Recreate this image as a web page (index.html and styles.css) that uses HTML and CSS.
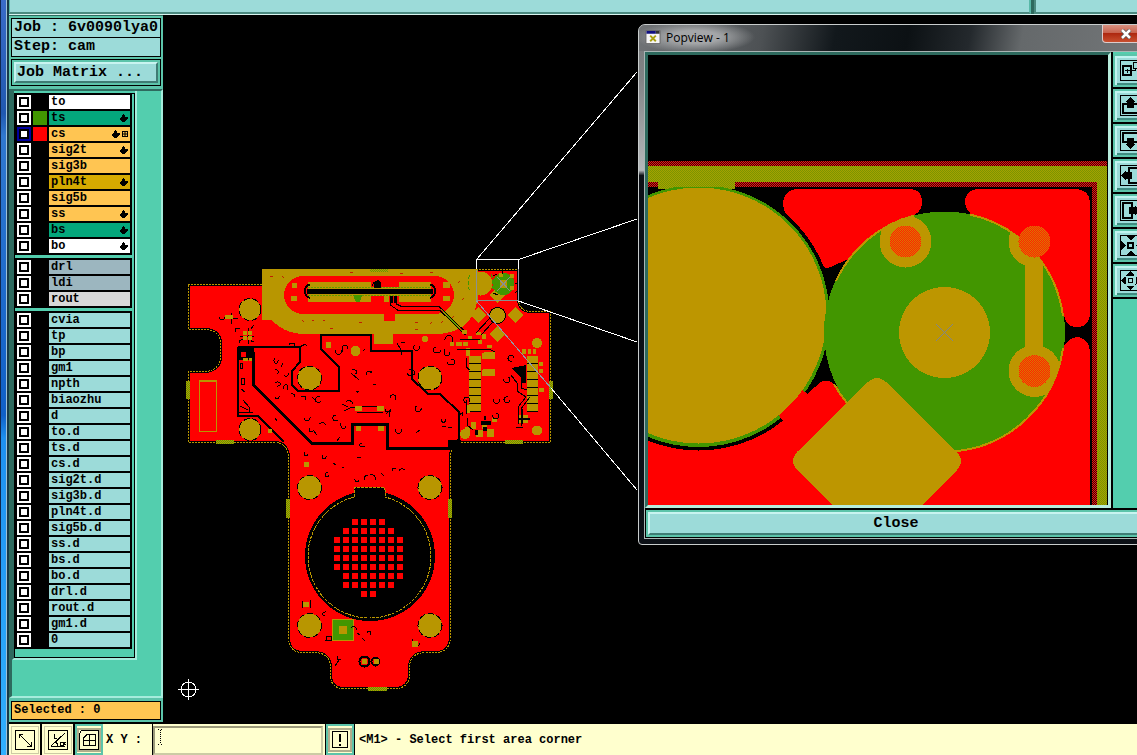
FILE: index.html
```html
<!DOCTYPE html>
<html lang="en">
<head>
<meta charset="utf-8">
<title>6v0090lya0 - cam</title>
<link rel="stylesheet" href="styles.css">
</head>
<body>
<svg class="defs" aria-hidden="true">
  <symbol id="hand" viewBox="0 0 8 8"><path d="M3 0h1v1h1v2h3v2H7v1H6v1H5v1H2V7H1V6H0V4h1V3h1V1h1z"/></symbol>
  <symbol id="grid" viewBox="0 0 6 6"><path d="M0 0h6v6H0zM1 1v1.500h1.500V1zM3.500 1v1.500H5V1zM1 3.500V5h1.500V3.500zM3.500 3.500V5H5V3.500z" fill-rule="evenodd"/></symbol>
</svg>
<div class="app">
  <div class="edge"></div>
  <div class="screen">
    <div class="topstrip"><div class="strip-main"></div><div class="strip-side"></div></div>
    <main class="work">
      <aside class="sidebar">
        <section class="job">
          <div class="field">Job : 6v0090lya0</div>
          <div class="field step">Step: cam</div>
          <div class="matrix"><button class="matrix-btn" type="button">Job Matrix ...</button></div>
        </section>
        <section class="layers">
          <div class="panel">
            <ul class="group">
              <li><input type="checkbox" id="l1"><i></i><label for="l1" class="white">to</label></li>
              <li><input type="checkbox" id="l2"><i class="sw-green"></i><label for="l2" class="green">ts<svg class="hand"><use href="#hand"/></svg></label></li>
              <li><input type="checkbox" id="l3" class="work-layer"><i class="sw-red"></i><label for="l3" class="orange">cs<svg class="hand"><use href="#hand"/></svg><svg class="grid"><use href="#grid"/></svg></label></li>
              <li><input type="checkbox" id="l4"><i></i><label for="l4" class="orange">sig2t<svg class="hand"><use href="#hand"/></svg></label></li>
              <li><input type="checkbox" id="l5"><i></i><label for="l5" class="orange">sig3b</label></li>
              <li><input type="checkbox" id="l6"><i></i><label for="l6" class="gold">pln4t<svg class="hand"><use href="#hand"/></svg></label></li>
              <li><input type="checkbox" id="l7"><i></i><label for="l7" class="orange">sig5b</label></li>
              <li><input type="checkbox" id="l8"><i></i><label for="l8" class="orange">ss<svg class="hand"><use href="#hand"/></svg></label></li>
              <li><input type="checkbox" id="l9"><i></i><label for="l9" class="green">bs<svg class="hand"><use href="#hand"/></svg></label></li>
              <li><input type="checkbox" id="l10"><i></i><label for="l10" class="white">bo<svg class="hand"><use href="#hand"/></svg></label></li>
            </ul>
            <ul class="group">
              <li><input type="checkbox" id="l11"><i></i><label for="l11" class="slate">drl</label></li>
              <li><input type="checkbox" id="l12"><i></i><label for="l12" class="slate">ldi</label></li>
              <li><input type="checkbox" id="l13"><i></i><label for="l13" class="grey">rout</label></li>
            </ul>
            <ul class="group">
              <li><input type="checkbox" id="l14"><i></i><label for="l14">cvia</label></li>
              <li><input type="checkbox" id="l15"><i></i><label for="l15">tp</label></li>
              <li><input type="checkbox" id="l16"><i></i><label for="l16">bp</label></li>
              <li><input type="checkbox" id="l17"><i></i><label for="l17">gm1</label></li>
              <li><input type="checkbox" id="l18"><i></i><label for="l18">npth</label></li>
              <li><input type="checkbox" id="l19"><i></i><label for="l19">biaozhu</label></li>
              <li><input type="checkbox" id="l20"><i></i><label for="l20">d</label></li>
              <li><input type="checkbox" id="l21"><i></i><label for="l21">to.d</label></li>
              <li><input type="checkbox" id="l22"><i></i><label for="l22">ts.d</label></li>
              <li><input type="checkbox" id="l23"><i></i><label for="l23">cs.d</label></li>
              <li><input type="checkbox" id="l24"><i></i><label for="l24">sig2t.d</label></li>
              <li><input type="checkbox" id="l25"><i></i><label for="l25">sig3b.d</label></li>
              <li><input type="checkbox" id="l26"><i></i><label for="l26">pln4t.d</label></li>
              <li><input type="checkbox" id="l27"><i></i><label for="l27">sig5b.d</label></li>
              <li><input type="checkbox" id="l28"><i></i><label for="l28">ss.d</label></li>
              <li><input type="checkbox" id="l29"><i></i><label for="l29">bs.d</label></li>
              <li><input type="checkbox" id="l30"><i></i><label for="l30">bo.d</label></li>
              <li><input type="checkbox" id="l31"><i></i><label for="l31">drl.d</label></li>
              <li><input type="checkbox" id="l32"><i></i><label for="l32">rout.d</label></li>
              <li><input type="checkbox" id="l33"><i></i><label for="l33">gm1.d</label></li>
              <li><input type="checkbox" id="l34"><i></i><label for="l34">0</label></li>
            </ul>
          </div>
        </section>
        <div class="selected"><div>Selected : 0</div></div>
      </aside>
      <div class="canvas">
        <svg class="board" viewBox="163 15 974 709" preserveAspectRatio="xMinYMin meet" shape-rendering="crispEdges" fill="none">
          <defs>
            <pattern id="cells" x="334" y="519" width="9" height="9" patternUnits="userSpaceOnUse"><path fill="#f00" d="M0 0h6v6H0z"/></pattern>
            <pattern id="pins" x="468" y="356" width="100" height="8" patternUnits="userSpaceOnUse"><path fill="#000" d="M0 0h100v8H0z"/><path fill="#b89600" d="M0 0h100v7H0z"/></pattern>
            <pattern id="mixed" width="2" height="2" patternUnits="userSpaceOnUse"><path fill="#b89600" d="M0 0h2v2H0z"/><path fill="#609c00" d="M0 0h1v1H0zM1 1h1v1H1z"/></pattern>
            <path id="outline" d="M188 284.500H262.500V269.500H518.500V299Q519 311 530 311.500H550.500V442.500H463Q451 443 450.500 456V638Q449 652 437 652.500H425Q411 653 409.500 666V676Q408 688 396 688.500H343Q331 688 330.500 676V666Q329 653 315 652.500H302Q289 652 288.500 638V456Q287 443 275 442.500H188.500V371.500H206Q219 370 220.500 358V342Q219 330 206 329.500H188.500V284.500"/>
          </defs>
          <use href="#outline" fill="#f00" stroke="#000" stroke-width="3"/>
          <!-- connector copper at the top edge -->
          <path fill="#b89600" d="M262 269H478V297Q475 318 462 327Q450 334 436 334H393V344H374V334H306Q290 334 280 327L271 320H262Z"/>
          <use href="#outline" stroke="#b89600" stroke-dasharray="2 1"/>
          <rect x="284" y="276" width="170" height="38" rx="19" fill="#f00"/>
          <path fill="#f00" d="M384 313h11v8h-11z"/>
          <path fill="#b89600" d="M308 282h63v20h-63zM399 282h32v20h-32zM371 287h28v9h-28zM292 283h5v5h-5zM291 296h6v5h-6zM443 282h7v6h-7zM443 296h7v5h-7zM384 296h5v6h-5z"/>
          <path stroke="#609c00" stroke-dasharray="2 1" d="M308 287.500H431M308 295.500H431"/>
          <path stroke="#000" stroke-width="5" d="M307 291.500H433"/>
          <path stroke="#000" stroke-width="2" d="M310 285q-5 0-5 6t5 7M430 285q5 0 5 6t-5 7"/>
          <path fill="#429600" d="M353 295h9l-2 7h-4z"/>
          <path fill="#000" d="M374 288v-5l4-3 3 3v5zM390 296h3v7h-3zM394 296h3v7h-3z"/>
          <path stroke="#000" d="M390.500 300v5l7 5h42l26 25M396.500 300v4l4 2h38l28 27M373 286a3 3 0 1 1 6-2"/>
          <path stroke="#609c00" d="M441 309l22 23"/>
          <path stroke="#c02000" d="M282 276l2 2M302 320l2 2M312 321l2-1M323 321l2-1M270 276h3M359 322h3M330 328h3M415 322h3M430 324l2-2M441 323l2-2M452 318l2-2M462 300l2-2M458 283l2-2M415 329h3M350 272h3M400 273h3M430 272h3"/>
          <!-- split-plane clearances -->
          <path stroke="#000" stroke-width="2" d="M262 347H300V362L292 371V385L298 391H339V367L321 349V335H371V351H412V379L428 394H440L459 412V441"/>
          <path stroke="#000" stroke-width="2" d="M238 347H262M238 347V416H258L284 442"/>
          <path stroke="#000" stroke-width="3" d="M253.500 352V385L312 443.500H352.500V424.500H387.500V448.500H450L459 440"/>
          <path fill="#000" d="M238 347h16v13h-16zM448 440h13v9h-13z"/>
          <path fill="#f00" d="M241 352h5v5h-5z"/>
          <path fill="#b89600" d="M243 358h5v3h-5zM249 358h3v3h-3z"/>
          <!-- mounting pads -->
          <g fill="#b89600" stroke="#000" stroke-width="1" stroke-dasharray="6 3">
            <circle cx="250" cy="309.500" r="11"/><circle cx="250" cy="429.500" r="11"/>
            <circle cx="309.500" cy="378" r="12"/><circle cx="430" cy="378" r="12"/>
            <circle cx="309.500" cy="487.500" r="12"/><circle cx="430" cy="487.500" r="12"/>
            <circle cx="309.500" cy="625.500" r="12"/><circle cx="430" cy="625.500" r="12"/>
          </g>
          <g fill="#b89600"><circle cx="355.500" cy="351" r="5"/><circle cx="537" cy="343" r="5"/><circle cx="537" cy="430.500" r="5"/><circle cx="465" cy="434" r="5"/><circle cx="425" cy="339" r="3"/></g>
          <!-- speaker opening -->
          <circle cx="370" cy="556" r="65" fill="#000"/>
          <path fill="#000" d="M354 500V490q0-3 3-3h25q3 0 3 3v10z"/>
          <path stroke="#b89600" stroke-dasharray="3 1" d="M354 497V490q0-3 3-3h25q3 0 3 3v7A61.500 61.500 0 1 1 354 497"/>
          <path fill="url(#cells)" d="M351 519h36v9h9v9h9v45h-9v9h-18v9h-18v-9h-18v-9h0v-12h-9v-33h9v-9h9z"/>
          <path fill="#000" d="M334 570h8v30h-8z"/>
          <path fill="#f00" d="M334 564h6v6h-6zM343 582h6v6h-6z"/>
          <path fill="#429600" stroke="#b89600" d="M332.500 619.500h21v21h-21z"/><path fill="#b89600" d="M339 626h8v8h-8z"/>
          <!-- edge tabs -->
          <path fill="url(#mixed)" d="M186 381h4v18h-4zM216 440h18v4h-18zM549 381h4v18h-4zM505 440h18v4h-18zM286 499h4v19h-4zM448 499h4v19h-4zM368 687h19v4h-19zM370 269h18v3h-18z"/>
          <path stroke="#b89600" d="M199.500 380.500h17v51h-17zM199 381.500h17"/>
          <!-- right-hand components -->
          <path fill="url(#pins)" d="M469 356h12v56h-12z"/><path fill="url(#pins)" d="M527 356h11v56h-11z"/>
          <path fill="#b89600" d="M482 353l3-1h10v7h-13zM482 370l2-1h11v7h-13zM476 430h7v7h-7zM487 429h7v8h-7zM471 422h5v7h-5zM482 424h5v5h-5zM492 418h5v4h-5zM465 427h5v5h-5zM522 349h4v5h-4zM528 349h3v5h-3zM533 349h3v5h-3zM539 362h4v4h-4zM539 369h4v4h-4zM539 388h5v4h-5zM518 415h10v8h-10zM466 348h4v8h-4zM450 342h4v4h-4zM456 342h6v4h-6zM463 342h5v4h-5zM468 336h4v3h-4zM476 332h5v3h-5zM482 334h4v5h-4zM462 330h5v4h-5zM487 345h5v3h-5zM478 340h4v4h-4zM466 405h4v8h-4z"/>
          <path fill="#b89600" d="M497 287l8 8-8 8-8-8zM478 307l8 8-8 8-8-8zM515 307l8 8-8 8-8-8zM497 326l8 8-8 8-8-8z"/>
          <circle cx="497.500" cy="315.500" r="8" fill="#b89600" stroke="#000" stroke-width="1"/>
          <path fill="#000" d="M512 368l14-3v18h-5v-5l-8-8zM481 421h10v4h-10zM475 430h3v5h-3zM483 427h4v4h-4zM518 418h12v2h-12zM484 416h2v4h-2z"/>
          <path stroke="#000" d="M514 369l7 8v11l6 2M511 375l6 8v8l9 6M526 397l-8 10v17M530 397l-9 12v17M522 409v15M490 318l-14 15M493 322l-12 13M457 349h32l6 3M460 339h20M466 358v9l4 3M466 400v14M467 418v7l6 5"/>
          <!-- vias, drills and thermal clearances -->
          <path stroke="#000" d="M219 317a3 3 0 1 0 6-1M240 328h-5v4M254 325l-3 4M239 343a3 3 0 0 1 4-3M254 341h-3v-4M248 328v16M240 336h14M231 313v11M226 318h12M289 345a3 2 0 1 1 3 2M300 347q5-4 7-1M275 358a2 3 0 1 0 3 2M283 363l-2 4M275 370a2 2 0 1 1 2 4M284 375a2 2 0 1 0 4-2M275 383a3 2 0 1 1 2 3M284 389a2 3 0 1 1 3 1M275 397a2 2 0 1 0 4-1M291 394a3 3 0 0 1 4 3M301 396h4v4M312 397l3 3M321 401a3 3 0 1 1-1-4M240 363h2v5h-2zM241 378h3v6h-3zM241 389l4 3M243 400l6 7v6M240 406l8 4M238 412h15M275 418l2 3M304 418a3 3 0 1 0 6-1M319 424q5-3 7 1M341 423a2 3 0 1 0 5 3M309 428v3h4M317 435l-4-5M340 437l-3 4M342 404l6 3M344 411l8-4h5M346 402a3 2 0 1 1 6 2M357 406h26M357 412h26M336 350a3 3 0 1 0 5 0M343 352a3 4 0 1 1 5-3M351 373l8 7M352 370a3 2 0 1 1 3 4M367 375a3 2 0 1 1 5-3M356 391h3l-2 2M365 349l-2 2M336 415a3 3 0 1 0 2 5M397 343l4 7v5M405 342h-4M415 345a3 3 0 1 0 4 1M436 347a4 3 0 1 0 5 3M445 340a4 4 0 1 1 7 2M445 349a3 4 0 1 0 5 3M447 362a4 3 0 1 0 4-3M399 350h11M407 373a4 3 0 1 0 2-3M385 409a3 3 0 1 0 6 0M390 398a3 3 0 1 1 5 2M386 414l3-3v6M417 406a3 3 0 1 0 4 2M442 419a2 2 0 1 0 3 0M442 426h4M448 427h4M416 433l4-3M396 429a3 3 0 1 0 5 0M373 384l3 1M372 372h-2M494 399a3 3 0 1 0 5 0M508 397a3 3 0 1 0 2 3M504 379a3 3 0 1 0 4-2M512 361a3 3 0 1 1 2-3M493 415a3 3 0 1 0 3-2M466 403a3 3 0 1 1 3-1M516 427h7"/>
          <path stroke="#000" d="M305 452a2 2 0 1 0 3 2M323 455a2 2 0 1 0 3 1M333 463l3 2M328 473a2 2 0 1 0 1 2M342 468l2-1M357 457h4M362 443a3 2 0 1 0 3 3M355 479a2 2 0 1 0 4 1M365 480q-2-5 3-4M370 475q6-1 5 5M393 471q-2-3 3-3M399 471q2-4 6-1M302 608v-7M310 600v8M326 612a3 2 0 1 0-1 4M327 636h4v4h-5zM351 628a2 2 0 1 1 5 2M357 633l3 2M367 633a2 2 0 1 1 3 2M362 638l3 3M337 656v3h4M335 666l4-6M413 639a3 4 0 1 0 7 4M458 416l4-3v3M381 473l3 3"/>
          <g stroke="#000" stroke-width="2"><circle cx="364.500" cy="661.500" r="5"/><circle cx="375.500" cy="661.500" r="4"/></g>
          <path fill="#b89600" d="M362 659h5v5h-5zM374 659h5v5h-5zM303 602h6v5h-6zM412 641h6v6h-6zM304 462h5v5h-5zM326 342h5v6h-5zM225 315h8v4h-8zM243 331h4v4h-4zM248 331h4v4h-4zM243 336h4v4h-4zM248 336h4v4h-4zM268 429h4v4h-4zM355 406h7v5h-7zM377 406h7v5h-7zM356 426h5v5h-5zM378 426h6v5h-6z"/>
          <!-- magnified area -->
          <circle cx="480.500" cy="283.500" r="12" fill="#b89600"/><path stroke="#429600" stroke-dasharray="4 2" d="M470 275q-4 8 0 17M491 274q4 8 0 18"/>
          <circle cx="503.500" cy="284" r="11" fill="#429600"/>
          <circle cx="503.500" cy="284" r="4" fill="#b89600"/>
          <path fill="#b89600" d="M499 273h4v4h-4zM510 274h4v4h-4zM510 286h4v4h-4z"/>
          <path stroke="#8a9090" d="M497 277l13 14M510 277l-13 14M476.500 301V270M518.500 300.500H476"/>
          <path stroke="#000" d="M502 270v4M493 276l4-2M515 283h4M493 293l5 2M515 293l3-3"/>
          <path stroke="#fff" d="M476.500 269V259.500H518.500V270M476.500 259.500L637 72M518.500 259.500L637 219M518.500 301L637 342M551 388L637 490"/>
          <path stroke="#8d9aa8" d="M518.500 269V301M476.500 301L551 388"/>
          <path stroke="#fff" d="M178 689.500H199M188.500 679V700"/><circle cx="188.500" cy="689.500" r="7.500" stroke="#fff"/>
        </svg>
      </div>
    </main>
    <footer class="status">
      <button class="tool" type="button" aria-label="Zoom area"><svg viewBox="0 0 20 20"><path d="M.5.500h19v19H.5zM4 4l12 12M4 8V4h4M12 16h4v-4"/></svg></button>
      <button class="tool" type="button" aria-label="Angle"><svg viewBox="0 0 20 20"><path d="M.5.500h19v19H.5zM3 16L17 3M3 16.500h14M6 4v4h3M7 12q3 1 3 4M12 12h3v3h-3zM16 12v3M18 12l-2 1 2 2"/></svg></button>
      <button class="tool framed" type="button" aria-label="Grid"><svg viewBox="0 0 20 20"><path d="M2.500.500h17v19h-19V4zM4.500 8L8 4.500h8v11H4.500zM10.500 4v12M4 10.500h12"/></svg></button>
      <label class="xy" for="xy">X Y :</label>
      <div class="entry"><input id="xy" type="text"><svg viewBox="0 0 5 16"><path d="M0 .500h2M3 .500h2M2.500 1v14M0 15.500h2M3 15.500h2"/></svg></div>
      <button class="tool framed alert" type="button" aria-label="Interrupt"><svg viewBox="0 0 20 20"><path d="M2.500 1.500h15v16h-15z"/><path stroke-width="2" d="M10 4v8M10 14v2"/></svg></button>
      <output class="message">&lt;M1&gt; - Select first area corner</output>
    </footer>
    <section class="popview" aria-label="Popview - 1">
      <header class="titlebar">
        <svg class="winicon" viewBox="0 0 16 16"><path fill="#f5f5f5" stroke="#666" d="M.5.500h15v14H.5z"/><path fill="#101080" d="M1 1h10v3H1z"/><path fill="#333" d="M11 1h4v3h-4z"/><path stroke="#a8a010" stroke-width="2" d="M5 6l6 6M11 6l-6 6"/></svg>
        <span>Popview - 1</span>
        <button class="close-x" type="button" aria-label="Close window"><svg viewBox="0 0 12 10"><path d="M2 1l8 8M10 1L2 9" stroke="#555" stroke-width="4"/><path d="M2 1l8 8M10 1L2 9" stroke="#fff" stroke-width="2.500"/></svg></button>
      </header>
      <div class="pop-body">
        <div class="pop-main">
          <div class="pop-view">
            <svg viewBox="648 55 460 450" preserveAspectRatio="xMinYMin meet" shape-rendering="crispEdges" fill="none">
              <defs>
                <pattern id="redhatch" width="2" height="2" patternUnits="userSpaceOnUse"><path fill="#400" d="M0 0h2v2H0z"/><path fill="#e41818" d="M0 0h1v1H0zM1 1h1v1H1z"/></pattern>
                <pattern id="olive" width="2" height="2" patternUnits="userSpaceOnUse"><path fill="#a5a200" d="M0 0h2v2H0z"/><path fill="#7b9400" d="M0 0h1v1H0zM1 1h1v1H1z"/></pattern>
                <pattern id="padhatch" width="2" height="2" patternUnits="userSpaceOnUse"><path fill="#ff2400" d="M0 0h2v2H0z"/><path fill="#da7800" d="M0 0h1v1H0zM1 1h1v1H1z"/></pattern>
                <clipPath id="disc"><circle cx="944.500" cy="332" r="120.500"/></clipPath>
              </defs>
              <path fill="#000" d="M648 55h460v451H648z"/>
              <path fill="url(#redhatch)" d="M648 161h459v345h-15V187H648z"/>
              <path fill="url(#olive)" d="M648 166h459v340h-10V182H735v7h-77v-7h-10z"/>
              <path fill="#f00" d="M797 189H910Q922 190 922 202Q922 211 914 215L870 250L835 265Q825 272 820 262Q804 240 788 218Q783 210 783 202Q785 190 797 189ZM977 189H1076Q1090 190 1090 204V315Q1088 327 1077 327Q1066 327 1064 315L980 250L970 213Q965 208 965 200Q967 190 977 189Z"/>
              <path fill="#f00" d="M648 400H800L815 387Q825 376 834 384L900 450L1062 350Q1067 338 1077 337Q1088 338 1090 351V506H648Z"/>
              <circle cx="698.500" cy="316" r="134.500" fill="#000"/>
              <path fill="url(#olive)" d="M658 182h77v7h-77z"/>
              <path fill="url(#redhatch)" d="M648 182h10v5h-10zM735 182h20v5h-20z"/>
              <circle cx="698.500" cy="316" r="131" fill="#429600"/>
              <path fill="url(#olive)" d="M658 182h77v5h-77z"/>
              <path fill="#f00" d="M776 412l9 11 25-27-10-8z"/>
              <circle cx="698.500" cy="315.500" r="128" fill="#bd9600"/>
              <circle cx="944.500" cy="332" r="120.500" fill="#429600"/>
              <path stroke="#bd9600" stroke-width="2" d="M970 214.500A120 120 0 0 1 1063 316M1063 348A120 120 0 0 1 952 451.500M834 384A120 120 0 0 0 847 403M836 281A120 120 0 0 1 914 215.500"/>
              <g fill="#bd9600" clip-path="url(#disc)"><circle cx="905.500" cy="241.500" r="26"/><circle cx="1034.500" cy="241.500" r="26"/><circle cx="1034.500" cy="371" r="26"/><path d="M1025 262h18v90h-18z"/></g>
              <circle cx="944.500" cy="332.500" r="45.500" fill="#bd9600"/>
              <g fill="url(#padhatch)"><circle cx="905.500" cy="241.500" r="16"/><circle cx="1034.500" cy="241.500" r="16"/><circle cx="1034.500" cy="371" r="16"/></g>
              <path fill="#bd9600" d="M868 382Q877 374 886 382L957 452Q965 461 957 470L915 512H839L797 470Q789 461 797 452Z"/>
              <path stroke="#81858a" d="M936 324l17 17M953 324l-17 17"/>
            </svg>
          </div>
          <nav class="pop-tools">
            <button type="button" aria-label="Link view"><svg viewBox="0 0 21 21"><path d="M.5.500h20v20H.5z"/><path stroke-width="2" d="M3 6h8v9H3z"/><path d="M13.500 2.500h7v6h-7zM5 10.500h10V9M7.500 8.500v4M17 2v5"/></svg></button>
            <button type="button" aria-label="Pan up"><svg viewBox="0 0 21 21"><path d="M.5.500h20v20H.5z"/><path stroke-width="2" d="M7 9H3v9h15V9h-4"/><path class="f" d="M10.500 2l5 5H14v6H7V7H5z"/></svg></button>
            <button type="button" aria-label="Pan down"><svg viewBox="0 0 21 21"><path d="M.5.500h20v20H.5z"/><path stroke-width="2" d="M7 12H3V3h15v9h-4"/><path class="f" d="M10.500 19l5-5H14V8H7v6H5z"/></svg></button>
            <button type="button" aria-label="Pan left"><svg viewBox="0 0 21 21"><path d="M.5.500h20v20H.5z"/><path stroke-width="2" d="M9 7V3h9v15H9v-4"/><path class="f" d="M1 10.500l5-5V7h6v7H6v2z"/></svg></button>
            <button type="button" aria-label="Pan right"><svg viewBox="0 0 21 21"><path d="M.5.500h20v20H.5z"/><path stroke-width="2" d="M12 7V3H3v15h9v-4"/><path class="f" d="M20 10.500l-5-5V7H9v7h6v2z"/></svg></button>
            <button type="button" aria-label="Zoom in"><svg viewBox="0 0 21 21"><path d="M.5.500h20v20H.5z"/><path stroke-width="2" d="M8 8h5v5H8z"/><path class="f" d="M6 1h9l-4.500 4.500zM6 20h9l-4.500-4.500zM1 6v9l4.500-4.500zM20 6v9l-4.500-4.500z"/></svg></button>
            <button type="button" aria-label="Zoom out"><svg viewBox="0 0 21 21"><path d="M.5.500h20v20H.5z"/><path d="M8.500 8.500h4v4h-4z"/><path class="f" d="M10.500 1l4 4.500h-8zM10.500 20l4-4.500h-8zM1 10.500l4.500-4v8zM20 10.500l-4.500-4v8z"/></svg></button>
          </nav>
        </div>
        <div class="pop-foot"><button type="button">Close</button></div>
      </div>
    </section>
  </div>
</div>
</body>
</html>
```
FILE: styles.css
```css
* { box-sizing: border-box; }
body { margin: 0; background: #000; overflow: hidden; font: bold 12px/14px "Liberation Mono", monospace; color: #000; }
button, input { font: inherit; color: inherit; margin: 0; padding: 0; border: 0; border-radius: 0; }
svg { display: block; }
.defs { position: absolute; width: 0; height: 0; }
.app { display: flex; height: 100vh; }
.edge { flex: 0 0 9px; background: linear-gradient(90deg, #102850 1px, transparent 1px, transparent 6px, #9fc0d8 6px, #9fc0d8 7px, #163a48 7px), linear-gradient(#3a6cc8, #2058b0 15%, #3078d0 18%, #1060c8 55%, #1e90f0 58%, #30b0ff); }
.screen { position: relative; flex: 1; min-width: 0; display: flex; flex-direction: column; }

.topstrip { flex: 0 0 15px; display: flex; gap: 3px; background: #2e6a5e; border-bottom: 1px solid #d8f4f0; }
.strip-main { flex: 1; background: #9cdbd9; border: solid #58b8a8; border-width: 0 2px 2px 1px; border-bottom-color: #4b8a80; }
.strip-side { flex: 0 0 103px; background: #9cdbd9; border: solid #4b8a80; border-width: 0 0 2px 2px; }

.work { flex: 1; min-height: 0; display: flex; }
.sidebar { flex: 0 0 154px; display: flex; flex-direction: column; background: #53ceae; }
.job { padding: 2px 2px 3px; background: #5cc4aa; border-top: 1px solid #2e6a5e; font-size: 15px; line-height: 18px; }
.field { height: 20px; padding-left: 2px; border: 1px solid #000; background: #9cdbd9; white-space: nowrap; overflow: hidden; }
.step { height: 19px; border-top: 0; }
.matrix { margin-top: 2px; padding: 2px; border: 1px solid #000; }
.matrix-btn { display: block; width: 100%; height: 21px; padding-left: 1px; text-align: left; background: #9cdbd9; border: 2px solid; border-color: #c8f4f0 #3f7c74 #3f7c74 #c8f4f0; }
.layers { flex: 1; min-height: 0; border: solid; border-width: 2px 2px 2px 3px; border-color: #2e6a5e #a5ecdc #a5ecdc #2e6a5e; }
.panel { display: flex; flex-direction: column; gap: 3px; width: 125px; padding: 2px 2px 9px 1px; border: solid; border-width: 0 2px 2px 2px; border-color: #a5ecdc #a5ecdc #a5ecdc #2e6a5e; outline: 1px solid #000; outline-offset: -3px; }
.group { margin: 0; padding: 2px; list-style: none; display: flex; flex-direction: column; gap: 2px; width: 117px; background: #000; }
.group li { display: grid; grid-template-columns: 14px 14px 1fr; gap: 2px; height: 14px; }
.group input { appearance: none; width: 14px; height: 14px; border: 2px solid #fff; background: #fff; box-shadow: inset 0 0 0 2px #000; }
.group input.work-layer { border-color: #0000a0; }
.group label { display: flex; align-items: center; gap: 2px; padding: 0 2px; background: #9cdbd9; line-height: 14px; }
.group .white { background: #fff; }
.group .green { background: #04a77c; }
.group .orange { background: #ffc552; }
.group .gold { background: #d6aa00; }
.group .slate { background: #9cb6bf; }
.group .grey { background: #d8d8d8; }
.sw-green { background: #429600; }
.sw-red { background: #f00; }
.hand { width: 8px; height: 8px; margin-left: auto; }
.grid { width: 6px; height: 6px; }
.selected { padding: 3px 2px 2px; background: #5cc4aa; border-bottom: 2px solid #000; }
.selected div { height: 19px; padding-left: 2px; border: 1px solid #000; background: #ffc552; line-height: 17px; }
.canvas { flex: 1; min-width: 0; overflow: hidden; background: #000; }
.board { width: 100%; height: auto; }

.status { flex: 0 0 31px; display: flex; background: #ffffce; overflow: hidden; }
.tool { flex: 0 0 33px; display: grid; place-content: center; background: #ffffce; border: solid #000; border-width: 0 2px 0 0; }
.tool svg { width: 20px; height: 20px; fill: none; stroke: #000; shape-rendering: crispEdges; outline: 1px solid #cccba4; outline-offset: 3px; }
.tool.framed { flex-basis: 28px; border-color: #5cc4aa; border-width: 2px; }
.tool.framed svg { outline: 2px solid #b0ae8c; outline-offset: 0; }
.tool.alert { margin-right: 2px; outline: 1px solid #000; }
.xy { flex: 0 0 49px; padding-left: 3px; line-height: 32px; white-space: nowrap; }
.entry { position: relative; flex: 0 0 171px; margin-right: 3px; border-left: 1px solid #000; }
.entry input { width: 100%; height: 29px; margin-top: 2px; padding-left: 8px; background: #ffffce; border: 2px solid; border-color: #9c9a7a #cccba4 #cccba4 #9c9a7a; }
.entry svg { position: absolute; left: 5px; top: 5px; width: 5px; height: 16px; fill: none; stroke: #000; stroke-dasharray: 1 1; }
.message { flex: 1; padding-left: 3px; line-height: 32px; white-space: nowrap; }

.popview { position: absolute; left: 629px; right: -19px; top: 24px; display: flex; flex-direction: column; padding: 0 7px 5px 5px; border: 1px solid #c8cccc; border-radius: 7px 7px 4px 4px; background: linear-gradient(#77797b, #808385 10%, #b4b8ba 28%, #0c1016 29%, #0c1016) left / 8px 100% no-repeat, #0c1016; }
.titlebar { display: flex; align-items: center; height: 26px; margin: 0 -7px 0 -5px; padding: 0 0 1px 6px; border-radius: 6px 6px 0 0; background: radial-gradient(ellipse 60px 16px at 56px 12px, #a4a6a8 40%, transparent), linear-gradient(100deg, #707376, #4d5154 24%, #12181c 38%, #0c1114 52%, #24292d 64%, #65696b 74%, #747779); font: 12px/16px "Open Sans", "Noto Sans", sans-serif; }
.winicon { width: 16px; height: 15px; margin-right: 5px; fill: none; }
.close-x { align-self: flex-start; margin-left: auto; margin-right: 6px; width: 47px; height: 18px; display: grid; place-content: center; border: 1px solid #dcc; border-top: 0; border-radius: 0 0 4px 4px; background: linear-gradient(#d89080, #c86450 45%, #ae2810 50%, #c85030); }
.close-x svg { width: 12px; height: 10px; fill: none; }
.pop-body { border: 1px solid #a9b5b4; background: #53ceae; }
.pop-main { display: flex; border-bottom: 1px solid #000; }
.pop-view { flex: 1; min-width: 0; border: 3px solid; border-color: #2e6a5e #b8ecdc #b8ecdc #2e6a5e; }
.pop-view svg { width: 100%; height: auto; }
.pop-tools { flex: 0 0 36px; display: flex; flex-direction: column; gap: 2px; padding-top: 2px; border-left: 2px solid #000; }
.pop-tools button { display: grid; place-content: center; height: 33px; background: #9cdbd9; border: 2px solid #5cc4aa; box-shadow: 0 2px #000, inset 2px 2px #c0f4f0, inset -2px -2px #3f8c80; }
.pop-tools svg { width: 21px; height: 21px; fill: none; stroke: #000; shape-rendering: crispEdges; }
.pop-tools .f { fill: #000; stroke: none; }
.pop-foot { padding: 2px; border: 1px solid #000; background: #5cc4aa; }
.pop-foot button { display: block; width: 100%; height: 23px; background: #9cdbd9; border: 2px solid; border-color: #c8f4f0 #3f7c74 #3f7c74 #c8f4f0; font-size: 15px; }
```
